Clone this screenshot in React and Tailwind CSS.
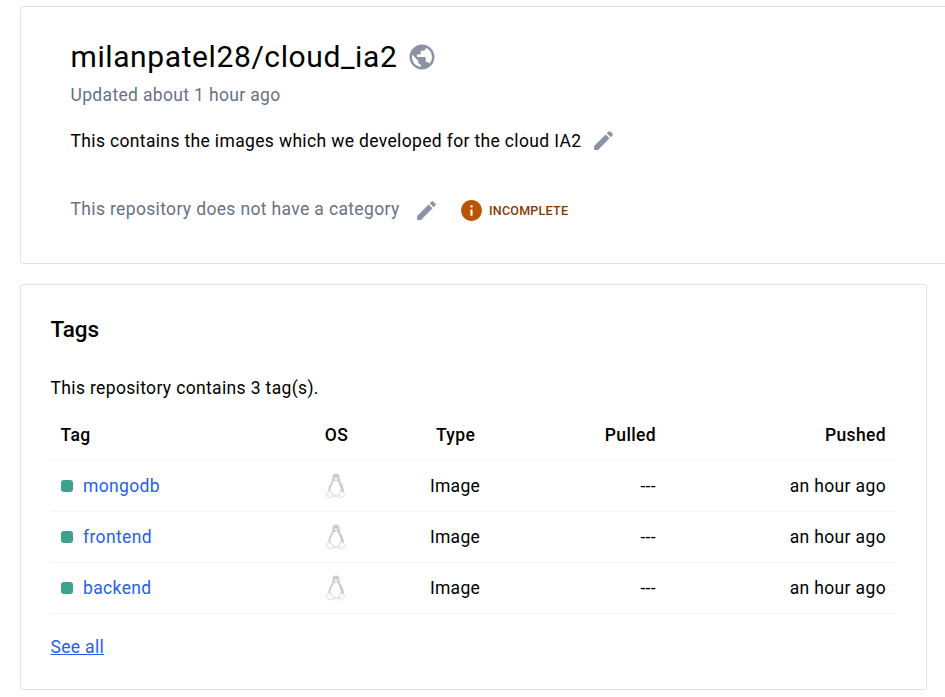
import { MdPublic, MdEdit, MdInfo } from "react-icons/md";

const tags = ["mongodb", "frontend", "backend"];

function Tux() {
  return (
    <svg viewBox="0 0 20 26" className="h-[26px] w-5">
      <path
        d="M10 .6C7.300 .6 6.300 2.300 6.400 4.500C6.500 7.300 6 8.300 4.600 10.700C3 13.300 2.300 15.300 2.400 18.500L5 23.400H15L17.900 18.500C18 15 16.400 11.500 14.900 9.500C13.600 7.600 13.700 6.300 13.600 4.300C13.500 2 12.500 .6 10 .6Z"
        fill="#cccccc"
      />
      <path
        d="M7.800 7.500C8.800 8.300 11 8.200 11.900 7.500C12.400 10.500 14.800 13 14.800 18L12.800 22.200C11.500 22.700 9 22.700 7.500 22L4.300 17.600C4.200 13.500 7.300 11 7.800 7.500Z"
        fill="#fff"
      />
      <path d="M7.900 5.200L10 4.200L12 5.200L10.200 7.400Z" fill="#f2f2f2" />
      <path
        d="M3.500 17.300L7.200 22C7.700 23.500 6.700 25 5.300 25L.9 23.400C.3 22.800 .8 21.800 .7 19.600L2.500 19.100Z M14 17.900L16.700 18.600L19.400 21.200C19.600 22.200 17.500 23.400 15.500 25C14.200 25.500 12.700 24.700 12.900 23.300Z"
        fill="#fcfcfc"
        stroke="#d8d8d8"
        strokeWidth=".8"
      />
    </svg>
  );
}

export default function App() {
  return (
    <main className="h-[697px] w-[945px] overflow-hidden bg-white pl-5 pt-1.5 font-[Roboto,sans-serif] text-[17.5px] leading-[25px] text-black">
      <section className="h-[258px] w-[960px] rounded-[3px] border border-[#e1e2e6] pl-[49.5px] pt-[30px]">
        <div className="flex h-10 items-center">
          <h1 className="w-[336.5px] whitespace-nowrap text-[30px] leading-10 tracking-[0.6px]">milanpatel28/cloud_ia2</h1>
          <MdPublic className="size-[30px] text-[#8993a5]" />
        </div>
        <p className="mt-1.5 whitespace-nowrap tracking-[0.34px] text-[#677285]">Updated about 1 hour ago</p>
        <div className="mt-5 flex h-[25px] items-start">
          <p className="mt-px w-[520.5px] whitespace-nowrap tracking-[0.35px]">
            This contains the images which we developed for the cloud IA2
          </p>
          <MdEdit className="size-[25px] text-[#8993a5]" />
        </div>
        <div className="mt-[43px] flex h-[27px] items-start">
          <p className="mt-px w-[343.5px] whitespace-nowrap tracking-[0.35px] text-[#677285]">This repository does not have a category</p>
          <MdEdit className="mt-0.5 size-[25px] text-[#8993a5]" />
          <MdInfo className="ml-5 mt-0.5 size-[25px] text-[#b85504]" />
          <span className="ml-[5px] mt-0.5 text-[12.5px] font-medium tracking-[0.25px] text-[#853a00]">INCOMPLETE</span>
        </div>
      </section>

      <section className="mt-5 h-[406px] w-[907px] rounded-[3px] border border-[#e1e2e6] px-[30px] pt-7">
        <h2 className="-ml-[0.5px] text-[22.5px] font-medium leading-8 tracking-[-0.05px]">Tags</h2>
        <p className="-ml-[0.5px] mt-[31px] tracking-[0.35px]">This repository contains 3 tag(s).</p>
        <table className="mt-2 w-[845px] table-fixed border-collapse tracking-[0.36px]">
          <colgroup>
            <col className="w-[240px]" />
            <col className="w-[90px]" />
            <col className="w-[149px]" />
            <col className="w-[136px]" />
            <col className="w-[230px]" />
          </colgroup>
          <thead>
            <tr className="h-[51px] border-b border-[#f3f4f6]">
              <th className="px-[9.5px] pt-0.5 text-left font-medium">Tag</th>
              <th className="pl-px pt-0.5 font-medium">OS</th>
              <th className="pt-0.5 font-medium">Type</th>
              <th className="px-2.5 pt-0.5 text-right font-medium">Pulled</th>
              <th className="px-2.5 pt-0.5 text-right font-medium">Pushed</th>
            </tr>
          </thead>
          <tbody>
            {tags.map((tag) => (
              <tr key={tag} className="h-[51px] border-b border-[#f3f4f6]">
                <td className="px-2.5">
                  <div className="flex items-center gap-2.5">
                    <span className="size-3 rounded-[3px] bg-[#3da18e]" />
                    <a className="pt-0.5 text-[#2560ea]">{tag}</a>
                  </div>
                </td>
                <td>
                  <div className="flex justify-center">
                    <Tux />
                  </div>
                </td>
                <td className="pr-px pt-0.5 text-center tracking-[0.3px]">Image</td>
                <td className="px-2.5 pt-0.5 text-right">---</td>
                <td className="px-2.5 pt-0.5 text-right">an hour ago</td>
              </tr>
            ))}
          </tbody>
        </table>
        <a className="-ml-[0.5px] mt-[21px] inline-block tracking-[0.33px] text-[#2560ea] underline">See all</a>
      </section>
    </main>
  );
}
